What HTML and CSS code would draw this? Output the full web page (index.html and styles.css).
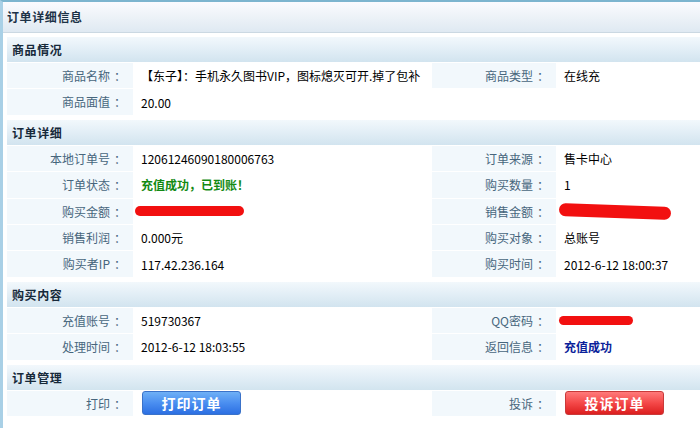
FILE: index.html
```html
<!DOCTYPE html>
<html lang="zh-CN">
<head>
<meta charset="utf-8">
<title>订单详细信息</title>
<link rel="stylesheet" href="styles.css">
</head>
<body>
<div class="frame">
  <div class="titlebar">订单详细信息</div>
  <div class="content">
    <section class="sec">
      <div class="sec-head">商品情况</div>
      <div class="grid">
        <div class="lab">商品名称<span class="c">：</span></div><div class="val">【东子】：手机永久图书VIP，图标熄灭可开.掉了包补</div>
        <div class="lab">商品类型<span class="c">：</span></div><div class="val">在线充</div>
        <div class="lab">商品面值<span class="c">：</span></div><div class="val">20.00</div>
        <div class="blank"></div><div class="blank"></div>
      </div>
    </section>
    <section class="sec">
      <div class="sec-head">订单详细</div>
      <div class="grid">
        <div class="lab">本地订单号<span class="c">：</span></div><div class="val">12061246090180006763</div>
        <div class="lab">订单来源<span class="c">：</span></div><div class="val">售卡中心</div>
        <div class="lab">订单状态<span class="c">：</span></div><div class="val"><span class="ok-green">充值成功，已到账！</span></div>
        <div class="lab">购买数量<span class="c">：</span></div><div class="val">1</div>
        <div class="lab">购买金额<span class="c">：</span></div><div class="val"><span class="redact r1"></span></div>
        <div class="lab">销售金额<span class="c">：</span></div><div class="val"><span class="redact r2"></span></div>
        <div class="lab">销售利润<span class="c">：</span></div><div class="val">0.000元</div>
        <div class="lab">购买对象<span class="c">：</span></div><div class="val">总账号</div>
        <div class="lab">购买者IP<span class="c">：</span></div><div class="val">117.42.236.164</div>
        <div class="lab">购买时间<span class="c">：</span></div><div class="val">2012-6-12 18:00:37</div>
      </div>
    </section>
    <section class="sec">
      <div class="sec-head">购买内容</div>
      <div class="grid">
        <div class="lab">充值账号<span class="c">：</span></div><div class="val">519730367</div>
        <div class="lab">QQ密码<span class="c">：</span></div><div class="val"><span class="redact r3"></span></div>
        <div class="lab">处理时间<span class="c">：</span></div><div class="val">2012-6-12 18:03:55</div>
        <div class="lab">返回信息<span class="c">：</span></div><div class="val"><span class="ok-blue">充值成功</span></div>
      </div>
    </section>
    <section class="sec">
      <div class="sec-head">订单管理</div>
      <div class="grid">
        <div class="lab">打印<span class="c">：</span></div><div class="val"><button class="btn btn-blue" type="button">打印订单</button></div>
        <div class="lab">投诉<span class="c">：</span></div><div class="val"><button class="btn btn-red" type="button">投诉订单</button></div>
      </div>
    </section>
  </div>
</div>
</body>
</html>
```
FILE: styles.css
```css
* { box-sizing: border-box; }
html, body { margin: 0; padding: 0; background: #ffffff; }
body {
  font-family: "Noto Sans CJK SC", "Liberation Sans", sans-serif;
  font-size: 12px;
  color: #000;
  overflow: hidden;
}
.frame {
  border-top: 2px solid #7db5cf;
  border-left: 3px solid #a9d0e6;
  height: 428px;
}
.titlebar {
  height: 31px;
  line-height: 30px;
  padding-left: 4px;
  font-weight: bold;
  font-size: 12px;
  letter-spacing: 0.6px;
  color: #1c3247;
  background: linear-gradient(#fbfbff 0%, #eef3f8 45%, #dfe9f2 100%);
  border-bottom: 1px solid #cbd8e2;
}
.content {
  padding: 4px 0 0 4px;
}
.sec { margin-bottom: 5px; }
.sec-head {
  height: 25px;
  line-height: 25px;
  padding-left: 5px;
  font-weight: bold;
  letter-spacing: 0.6px;
  color: #16293a;
  background: linear-gradient(#f2f8fc 0%, #e2eef6 50%, #d2e4ef 100%);
  margin-bottom: 1px;
}
.grid {
  display: grid;
  grid-template-columns: 126px 297px 124px 1fr;
  grid-auto-rows: 25.4px;
  gap: 1px;
}
.lab {
  background: #f2f8fc;
  color: #47667d;
  text-align: right;
  padding-right: 7px;
  line-height: 25px;
  white-space: nowrap;
}
.c { padding-left: 4px; }
.val {
  background: #fff;
  padding-left: 7px;
  line-height: 25px;
  white-space: nowrap;
  overflow: hidden;
  display: flex;
  align-items: center;
}
.blank { background: #fff; }
.ok-green { color: #138a13; font-weight: bold; }
.ok-blue { color: #0b1f9a; font-weight: bold; }
.redact {
  display: inline-block;
  background: #f21010;
  border-radius: 6px;
}
.r1 { width: 109px; height: 10px; margin-left: -6px; }
.r2 { width: 112px; height: 13px; margin-left: -5px; transform: rotate(2deg); border-radius: 8px; }
.r3 { width: 74px; height: 9px; margin-left: -5px; }
.btn {
  font-family: "Noto Sans CJK SC", sans-serif;
  font-size: 14px;
  font-weight: bold;
  color: #fff;
  width: 99px;
  height: 24px;
  padding: 0;
  border-radius: 3px;
  margin-left: 1px;
  margin-top: 0;
  letter-spacing: 1px;
  cursor: pointer;
}
.btn-blue {
  background: linear-gradient(#6fb0f6 0%, #4a8ef0 50%, #2c6fe2 100%);
  border: 1px solid #3a72c9;
}
.btn-red {
  background: linear-gradient(#ff7a7a 0%, #f44848 50%, #dc1f1f 100%);
  border: 1px solid #c93a3a;
}
```
